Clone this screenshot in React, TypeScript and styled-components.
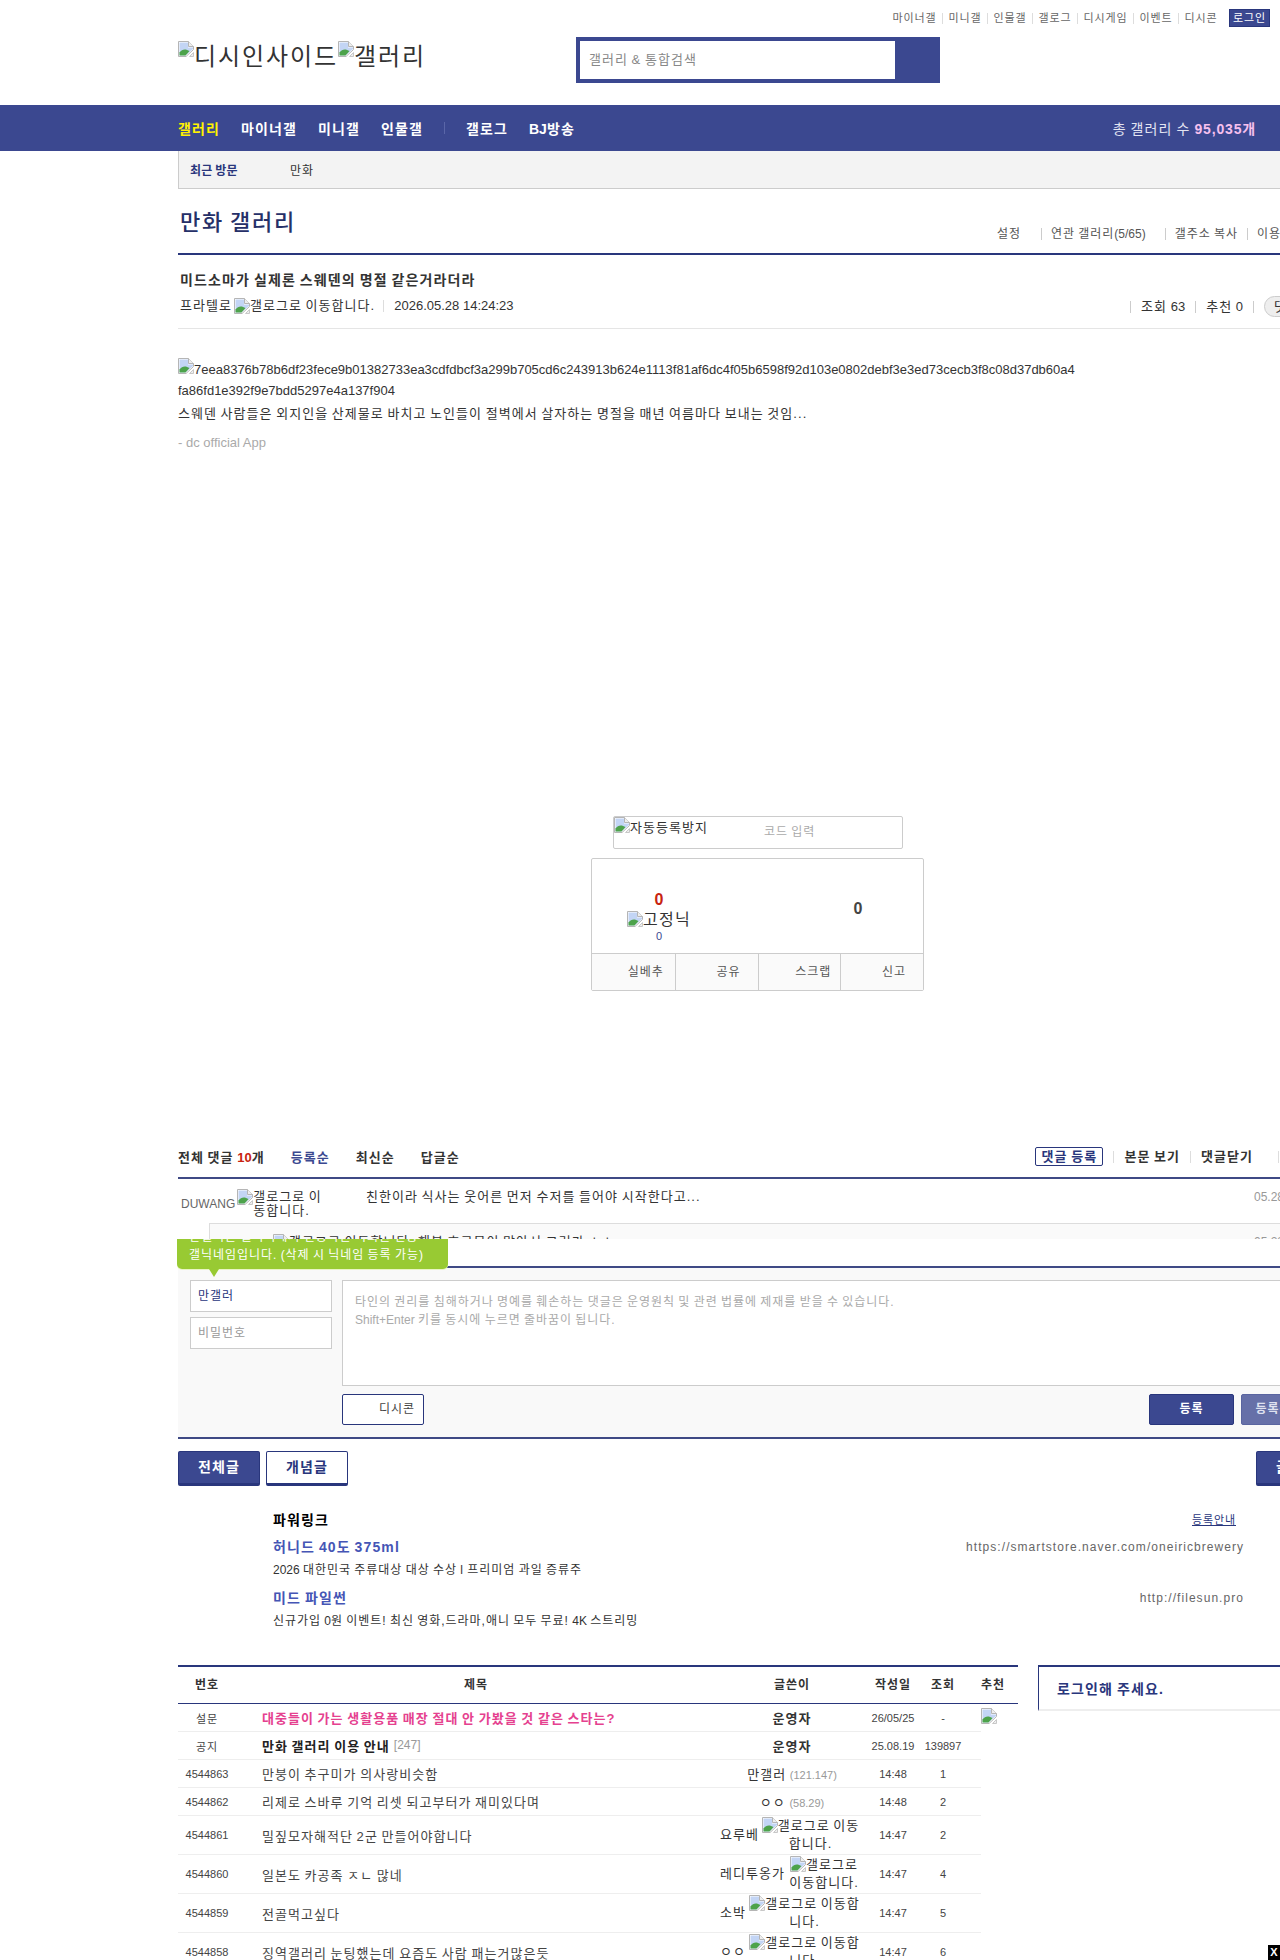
import styled, { createGlobalStyle } from 'styled-components';

const primary = '#3b4890';
const navy = '#29367c';

// the Hangul here runs 0.92em wide, the target has it at a full em
const GlobalStyle = createGlobalStyle`
    html, body {
        margin: 0;
        padding: 0;
        overflow: hidden;
        background: #fff;
    }
    body {
        font-family: "Liberation Sans", "Noto Sans CJK KR", sans-serif;
        font-size: 13px;
        color: #333;
    }
    * {
        letter-spacing: 0.08em;
        word-spacing: -0.08em;
    }
    #root {
        width: 1280px;
        height: 1960px;
        overflow: hidden;
    }
`;

const Latin = styled.span`
    letter-spacing: 0;
    word-spacing: 0;
`;

const Page = styled.div`
    width: 1280px;
    height: 1960px;
    overflow: hidden;
    position: relative;
`;

const Shell = styled.div`
    width: 1160px;
    margin-left: 178px;
`;

const Header = styled.header`
    height: 105px;
    display: flex;
    flex-direction: column;
    position: relative;
`;

const TopLinks = styled.div`
    display: flex;
    justify-content: flex-end;
    align-items: center;
    height: 18px;
    margin: 9px 0 0 0;
    padding-right: 10px;
    width: 1092px;
`;

const TopLink = styled.a`
    font-size: 11px;
    color: #666;
    padding: 0 5.5px;
    line-height: 11px;
    border-left: 1px solid #ddd;
    &:first-child {
        border-left: none;
    }
`;

const LoginButton = styled.a`
    margin-left: 6px;
    width: 41px;
    height: 18px;
    box-sizing: border-box;
    background: ${primary};
    border: 1px solid ${navy};
    color: #fff;
    font-size: 11px;
    line-height: 16px;
    text-align: center;
`;

const HeaderMain = styled.div`
    display: flex;
    margin-top: 10px;
`;

const Logo = styled.div`
    width: 398px;
    font-size: 24px;
    line-height: 32px;
    margin-top: 4px;
    color: #333;
    display: flex;
    align-items: flex-start;
`;

const SearchBox = styled.div`
    width: 364px;
    height: 46px;
    box-sizing: border-box;
    background: ${primary};
    padding: 4px 45px 4px 4px;
`;

const SearchInput = styled.div`
    height: 100%;
    background: #fff;
    color: #888;
    font-size: 13px;
    line-height: 38px;
    padding-left: 9px;
`;

const NavBar = styled.nav`
    height: 46px;
    background: ${primary};
    display: flex;
    align-items: center;
    justify-content: space-between;
    padding: 0 24px 0 178px;
`;

const NavGroup = styled.div`
    display: flex;
    align-items: center;
    gap: 21px;
`;

const NavItem = styled.a<{ $active?: boolean }>`
    font-size: 14px;
    font-weight: bold;
    color: ${({ $active }) => ($active ? '#fff200' : '#fff')};
`;

const NavDivider = styled.span`
    width: 1px;
    height: 12px;
    background: #5a66a8;
`;

const NavTotal = styled.div`
    font-size: 14px;
    color: #e3e5f2;
    b {
        color: #f6c0ee;
        letter-spacing: 0.06em;
    }
`;

const RecentBar = styled.div`
    height: 37px;
    box-sizing: content-box;
    background: #f3f3f3;
    border-left: 1px solid #ccc;
    border-bottom: 1px solid #ccc;
    display: flex;
    align-items: center;
    font-size: 12px;
    padding-left: 11px;
    b {
        width: 100px;
        color: ${navy};
        letter-spacing: 0.02em;
    }
`;

const TitleRow = styled.div`
    display: flex;
    justify-content: space-between;
    align-items: flex-end;
    height: 64px;
    border-bottom: 2px solid ${navy};
`;

const GalleryTitle = styled.h1`
    margin: 0 0 13px 2px;
    font-size: 22px;
    line-height: 34px;
    font-weight: 500;
    color: #263068;
`;

const TitleLinks = styled.div`
    display: flex;
    align-items: center;
    font-size: 12px;
    color: #555;
    margin: 0 24px 13px 0;
`;

const TitleLink = styled.a<{ $wide?: boolean }>`
    padding: 0 9px;
    line-height: 12px;
    border-left: 1px solid #ccc;
    &:first-child {
        border-left: none;
        padding-right: 20px;
    }
    ${({ $wide }) => $wide && 'padding-right: 19px;'}
`;

const PostHead = styled.div`
    height: 73px;
    border-bottom: 1px solid #e5e5e5;
    box-sizing: content-box;
`;

const PostTitle = styled.h2`
    margin: 0;
    padding: 15px 0 0 2px;
    font-size: 14px;
    line-height: 20px;
    font-weight: bold;
    color: #333;
`;

const PostMeta = styled.div`
    display: flex;
    justify-content: space-between;
    align-items: center;
    margin-top: 4px;
    padding-left: 2px;
    font-size: 13px;
    line-height: 18px;
    svg {
        margin-left: 2px;
    }
`;

const MetaLeft = styled.div`
    display: flex;
    align-items: center;
`;

const MetaDate = styled.span`
    margin-left: 8px;
    padding-left: 10px;
    line-height: 12px;
    border-left: 1px solid #ddd;
    letter-spacing: 0;
    word-spacing: 0;
`;

const MetaRight = styled.div`
    display: flex;
    align-items: center;
    padding-top: 2px;
`;

const Stat = styled.span`
    padding: 0 10px;
    line-height: 12px;
    border-left: 1px solid #ccc;
`;

const StatDivider = styled.span`
    width: 1px;
    height: 12px;
    background: #ccc;
    margin-right: 10px;
`;

const ReplyPill = styled.span`
    width: 74px;
    height: 21px;
    box-sizing: border-box;
    border: 1px solid #ccc;
    border-radius: 11px;
    background: #eee;
    padding-left: 9px;
    line-height: 19px;
`;

const PostBody = styled.div`
    height: 487px;
    padding-top: 29px;
    box-sizing: border-box;
    width: 900px;
    font-size: 13px;
    line-height: 21px;
    word-break: break-all;
    p {
        margin: 0;
    }
`;

const BodyHash = styled.p`
    letter-spacing: 0;
`;

const BodyText = styled.p`
    padding-top: 2px;
`;

const BodyApp = styled.p`
    color: #aaa;
    padding-top: 8px;
    letter-spacing: 0;
    word-spacing: 0;
`;

const Captcha = styled.div`
    width: 290px;
    height: 33px;
    box-sizing: border-box;
    margin: 0 auto;
    border: 1px solid #ccc;
    border-radius: 2px;
    display: flex;
    font-size: 13px;
    line-height: 16px;
`;

const CaptchaAlt = styled.div`
    width: 150px;
    display: flex;
    align-items: flex-start;
    span {
        display: block;
        padding-top: 3px;
    }
`;

const CaptchaPlaceholder = styled.div`
    font-size: 12px;
    color: #aaa;
    line-height: 31px;
`;

const RecommendBox = styled.div`
    width: 333px;
    height: 133px;
    box-sizing: border-box;
    margin: 9px 0 0 413px;
    border: 1px solid #ccc;
    border-radius: 2px;
    display: flex;
    flex-direction: column;
`;

const VoteArea = styled.div`
    height: 94px;
    border-bottom: 1px solid #ccc;
    display: grid;
    grid-template-columns: 134px 1fr;
`;

const VoteLeft = styled.div`
    padding-top: 31px;
    text-align: center;
    display: flex;
    flex-direction: column;
    align-items: center;
`;

const VoteCount = styled.div<{ $red?: boolean }>`
    font-size: 16px;
    line-height: 20px;
    font-weight: bold;
    letter-spacing: 0;
    color: ${({ $red }) => ($red ? '#c8230f' : '#444')};
`;

const VoteNick = styled.div`
    display: flex;
    font-size: 16px;
    line-height: 18px;
    margin-top: 1px;
`;

const VoteSub = styled.div`
    font-size: 11px;
    line-height: 14px;
    letter-spacing: 0;
    color: ${primary};
`;

const VoteRight = styled.div`
    padding: 40px 0 0 80px;
    text-align: center;
    width: 104px;
`;

const ActionRow = styled.div`
    flex: 1;
    display: grid;
    grid-template-columns: repeat(4, 1fr);
    background: #fafafa;
`;

const ActionCell = styled.div`
    border-left: 1px solid #ccc;
    font-size: 12px;
    color: #555;
    text-align: right;
    line-height: 36px;
    padding-right: 17px;
    &:first-child {
        border-left: none;
        padding-right: 11px;
    }
    &:nth-child(3) {
        padding-right: 9px;
    }
`;

const CommentHead = styled.div`
    margin-top: 156px;
    height: 30px;
    border-bottom: 2px solid #3f4a85;
    display: flex;
    justify-content: space-between;
    font-size: 13px;
    font-weight: bold;
    color: #333;
    line-height: 19px;
    box-sizing: content-box;
`;

const CommentTabs = styled.div`
    display: flex;
    gap: 26px;
    padding-top: 1px;
    em {
        font-style: normal;
        color: #c8230f;
        letter-spacing: 0;
    }
`;

const SortTab = styled.a<{ $active?: boolean }>`
    color: ${({ $active }) => ($active ? primary : '#333')};
`;

const CommentActions = styled.div`
    display: flex;
    align-items: flex-start;
`;

const CommentAction = styled.a`
    margin-top: 4px;
    padding: 0 10px;
    line-height: 12px;
    border-left: 1px solid #ddd;
    &:last-child {
        padding: 0 0 0 7px;
        margin-left: 15px;
    }
`;

const CommentRegister = styled.a`
    height: 19px;
    width: 68px;
    box-sizing: border-box;
    border: 1px solid ${navy};
    border-radius: 2px;
    color: ${navy};
    text-align: center;
    line-height: 17px;
    margin-right: 10px;
`;

const CommentList = styled.div`
    height: 60px;
    overflow: hidden;
`;

const CommentRow = styled.div`
    height: 44px;
    display: flex;
    padding-top: 10px;
    box-sizing: border-box;
    font-size: 13px;
    line-height: 16px;
`;

const CommentName = styled.div`
    width: 188px;
    flex: none;
    display: flex;
    padding-left: 3px;
    font-size: 12px;
    color: #666;
    line-height: 16px;
    align-items: flex-start;
    box-sizing: border-box;
    svg {
        margin-left: 2px;
    }
`;

const CommentNick = styled.span`
    padding-top: 7px;
    letter-spacing: 0;
`;

const CommentAlt = styled.div`
    width: 72px;
    flex: none;
    font-size: 13px;
    line-height: 14px;
    padding-top: 1px;
    color: #333;
`;

const CommentText = styled.div`
    flex: 1;
`;

const CommentDate = styled.div`
    font-size: 12px;
    color: #999;
    width: 84px;
    flex: none;
    letter-spacing: 0;
`;

const ReplyRow = styled(CommentRow)`
    margin-left: 31px;
    border-top: 1px solid #ddd;
    border-left: 1px solid #ddd;
    background: #fafafa;
    padding-left: 63px;
`;

const FormGap = styled.div`
    height: 27px;
    position: relative;
    z-index: 2;
`;

const NickTip = styled.div`
    position: absolute;
    left: -1px;
    top: 0;
    width: 271px;
    height: 30px;
    background: #98ca33;
    border-radius: 0 0 5px 5px;
    box-shadow: 0 1px 0 #e9f5c4;
    &::after {
        content: '';
        position: absolute;
        left: 32px;
        top: 30px;
        border-left: 5px solid transparent;
        border-right: 5px solid transparent;
        border-top: 8px solid #98ca33;
    }
`;

const NickTipText = styled.div`
    height: 100%;
    overflow: hidden;
    display: flex;
    flex-direction: column;
    justify-content: flex-end;
    padding: 0 12px 5px;
    box-sizing: border-box;
    color: #fff;
    font-size: 12px;
    line-height: 18px;
    white-space: nowrap;
`;

const ReplyForm = styled.div`
    border-top: 2px solid #3f4a85;
    border-bottom: 2px solid #3f4a85;
    background: #f9f9f9;
    display: grid;
    grid-template-columns: 142px 1fr;
    column-gap: 10px;
    padding: 12px 12px 0 12px;
    box-sizing: content-box;
    height: 157px;
`;

const FormLeft = styled.div`
    display: flex;
    flex-direction: column;
    gap: 5px;
`;

const FormInput = styled.div<{ $muted?: boolean }>`
    height: 32px;
    box-sizing: border-box;
    border: 1px solid #ccc;
    background: #fff;
    font-size: 12px;
    line-height: 31px;
    padding-left: 7px;
    color: ${({ $muted }) => ($muted ? '#999' : navy)};
`;

const FormRight = styled.div`
    display: flex;
    flex-direction: column;
`;

const FormTextarea = styled.div`
    height: 106px;
    box-sizing: border-box;
    border: 1px solid #ccc;
    background: #fff;
    color: #aaa;
    font-size: 12px;
    line-height: 18px;
    padding: 12px;
`;

const FormButtons = styled.div`
    display: flex;
    align-items: flex-start;
    margin-top: 8px;
    gap: 7px;
`;

const DcconButton = styled.a`
    width: 82px;
    height: 31px;
    box-sizing: border-box;
    border: 1px solid ${navy};
    border-radius: 2px;
    background: #fff;
    font-size: 12px;
    color: #444;
    line-height: 29px;
    text-align: right;
    padding-right: 8px;
    margin-right: auto;
`;

const SubmitButton = styled.a<{ $light?: boolean }>`
    width: 85px;
    height: 31px;
    box-sizing: border-box;
    border-radius: 2px;
    border: 1px solid ${({ $light }) => ($light ? '#5a65a0' : navy)};
    background: ${({ $light }) => ($light ? '#6670a8' : primary)};
    color: ${({ $light }) => ($light ? '#dfe2f0' : '#fff')};
    font-size: 12px;
    font-weight: bold;
    line-height: 29px;
    text-align: center;
`;

const TabRow = styled.div`
    display: flex;
    gap: 6px;
    margin-top: 12px;
    height: 35px;
`;

const TabButton = styled.a<{ $variant: 'solid' | 'line' }>`
    width: 82px;
    flex: none;
    box-sizing: border-box;
    border-radius: 2px;
    border: 1px solid ${navy};
    border-bottom-width: 3px;
    background: ${({ $variant }) => ($variant === 'solid' ? primary : '#fff')};
    color: ${({ $variant }) => ($variant === 'solid' ? '#fff' : navy)};
    font-size: 14px;
    font-weight: bold;
    line-height: 31px;
    text-align: center;
`;

const WriteButton = styled(TabButton)`
    margin-left: 902px;
`;

const PowerLink = styled.section`
    margin-top: 24px;
    padding-left: 95px;
    width: 971px;
    height: 123px;
`;

const PowerHead = styled.div`
    display: flex;
    justify-content: space-between;
    align-items: center;
    height: 18px;
    padding-right: 8px;
    font-size: 14px;
    font-weight: bold;
    color: #000;
    a {
        font-size: 11px;
        font-weight: normal;
        color: ${navy};
        text-decoration: underline;
    }
`;

const PowerItem = styled.div`
    margin-top: 9px;
    &:first-of-type {
        margin-top: 12px;
    }
`;

const PowerLine = styled.div`
    display: flex;
    justify-content: space-between;
    height: 21px;
    line-height: 20px;
`;

const PowerTitle = styled.a`
    color: #4555b5;
    font-size: 14px;
    font-weight: bold;
`;

const PowerUrl = styled.span`
    color: #666;
    font-size: 12px;
    letter-spacing: 1.05px;
`;

const PowerDesc = styled.div`
    font-size: 12px;
    line-height: 18px;
    margin-top: 3px;
    color: #333;
`;

const ListArea = styled.div`
    display: flex;
    align-items: flex-start;
    margin-top: 32px;
`;

const Board = styled.div`
    width: 840px;
    flex: none;
    border-top: 2px solid ${navy};
`;

const columns = '58px 480px 152px 50px 50px';

const BoardHead = styled.div`
    display: grid;
    grid-template-columns: ${columns} 50px;
    height: 37px;
    box-sizing: border-box;
    border-bottom: 1px solid ${navy};
    font-size: 12px;
    font-weight: bold;
    line-height: 37px;
    text-align: center;
    color: #333;
`;

const BoardRow = styled.div<{ $tall?: boolean }>`
    width: 803px;
    display: grid;
    grid-template-columns: ${columns} 13px;
    align-items: center;
    box-sizing: border-box;
    height: ${({ $tall }) => ($tall ? 39 : 28)}px;
    border-bottom: 1px solid #eee;
    text-align: center;
    font-size: 11px;
    color: #444;
    letter-spacing: 0;
    & > div {
        letter-spacing: 0;
    }
`;

const RowKind = styled.div`
    && {
        letter-spacing: 0.08em;
    }
`;

const RowTitle = styled.div<{ $kind?: 'survey' | 'notice' }>`
    text-align: left;
    padding-left: 26px;
    font-size: 13px;
    font-weight: ${({ $kind }) => ($kind ? 'bold' : 'normal')};
    color: ${({ $kind }) => ($kind === 'survey' ? '#e5418f' : $kind === 'notice' ? '#222' : '#444')};
    && {
        letter-spacing: 0.08em;
    }
    em {
        font-style: normal;
        font-weight: normal;
        font-size: 12px;
        color: #999;
        margin-left: 4px;
        letter-spacing: 0;
        position: relative;
        top: -2px;
    }
`;

const RowAuthor = styled.div<{ $bold?: boolean }>`
    font-size: 13px;
    font-weight: ${({ $bold }) => ($bold ? 'bold' : 'normal')};
    color: #333;
    && {
        letter-spacing: 0.08em;
    }
    span {
        font-size: 11px;
        color: #999;
        letter-spacing: 0;
    }
`;

const AuthorWithAlt = styled.div`
    font-size: 13px;
    line-height: 18px;
    color: #333;
    display: flex;
    justify-content: space-between;
    align-items: center;
    padding: 0 7px 0 4px;
    text-align: center;
    && {
        letter-spacing: 0.08em;
    }
`;

const AltBlock = styled.div<{ $width: number }>`
    width: ${({ $width }) => $width}px;
    flex: none;
    svg {
        vertical-align: -3px;
    }
`;

const RowExtra = styled.div`
    height: 16px;
    position: relative;
    top: -2px;
    svg {
        position: absolute;
        left: 13px;
        top: 0;
    }
`;

const SidePanel = styled.div`
    width: 300px;
    margin-left: 20px;
    height: 46px;
    box-sizing: border-box;
    border-top: 2px solid ${navy};
    border-left: 1px solid ${navy};
    border-bottom: 2px solid #eee;
    padding: 12px 0 0 18px;
    font-size: 14px;
    line-height: 20px;
    font-weight: bold;
    color: ${navy};
`;

const CloseAd = styled.a`
    position: fixed;
    right: 0;
    bottom: 0;
    width: 12px;
    height: 15px;
    background: #000;
    color: #fff;
    font-size: 11px;
    font-weight: bold;
    line-height: 15px;
    text-align: center;
    letter-spacing: 0;
`;

const BrokenImage = () => (
    <svg width="16" height="16" viewBox="0 0 16 16" style={{ flex: 'none' }}>
        <path d="M.5.5h10l5 5v3L8 15.500H.5z" fill="#fff" stroke="#b5b5b5" />
        <path d="M10.500.5v5h5" fill="#eee" stroke="#b5b5b5" />
        <path d="M1.500 1.500h8.500v5h5V8L7.500 14.500h-6z" fill="#c3d5f5" />
        <path d="M1.500 14.500v-3C4 8 7.500 7.500 11.500 10L7.500 14.500z" fill="#4da34b" />
        <path d="M16 9.500V16H9.500z" fill="#fff" />
        <path d="M11.500 15.500l4-4v4z" fill="#eee" stroke="#c8c8c8" />
    </svg>
);

const topLinks = ['마이너갤', '미니갤', '인물갤', '갤로그', '디시게임', '이벤트', '디시콘'];

type Row = { no: string; title: string; author: string; ip?: string; altWidth?: number; date: string; views: string };

const rows: Row[] = [
    { no: '4544863', title: '만붕이 추구미가 의사랑비슷함', author: '만갤러', ip: '(121.147)', date: '14:48', views: '1' },
    { no: '4544862', title: '리제로 스바루 기억 리셋 되고부터가 재미있다며', author: 'ㅇㅇ', ip: '(58.29)', date: '14:48', views: '2' },
    { no: '4544861', title: '밀짚모자해적단 2군 만들어야합니다', author: '요루베', altWidth: 101, date: '14:47', views: '2' },
    { no: '4544860', title: '일본도 카공족 ㅈㄴ 많네', author: '레디투옹가', altWidth: 74, date: '14:47', views: '4' },
    { no: '4544859', title: '전골먹고싶다', author: '소박', altWidth: 113, date: '14:47', views: '5' },
    { no: '4544858', title: '징역갤러리 눈팅했는데 요즘도 사람 패는거많은듯', author: 'ㅇㅇ', altWidth: 113, date: '14:47', views: '6' },
];

const App = () => (
    <Page>
        <GlobalStyle />
        <Shell>
            <Header>
                <TopLinks>
                    {topLinks.map((link) => (
                        <TopLink key={link}>{link}</TopLink>
                    ))}
                    <LoginButton>로그인</LoginButton>
                </TopLinks>
                <HeaderMain>
                    <Logo>
                        <BrokenImage />
                        디시인사이드
                        <BrokenImage />
                        갤러리
                    </Logo>
                    <SearchBox>
                        <SearchInput>갤러리 &amp; 통합검색</SearchInput>
                    </SearchBox>
                </HeaderMain>
            </Header>
        </Shell>
        <NavBar>
            <NavGroup>
                <NavItem $active>갤러리</NavItem>
                <NavItem>마이너갤</NavItem>
                <NavItem>미니갤</NavItem>
                <NavItem>인물갤</NavItem>
                <NavDivider />
                <NavItem>갤로그</NavItem>
                <NavItem>
                    <Latin>BJ</Latin>방송
                </NavItem>
            </NavGroup>
            <NavTotal>
                총 갤러리 수 <b>95,035개</b>
            </NavTotal>
        </NavBar>
        <Shell>
            <RecentBar>
                <b>최근 방문</b>
                <span>만화</span>
            </RecentBar>
            <TitleRow>
                <GalleryTitle>만화 갤러리</GalleryTitle>
                <TitleLinks>
                    <TitleLink>설정</TitleLink>
                    <TitleLink $wide>
                        연관 갤러리<Latin>(5/65)</Latin>
                    </TitleLink>
                    <TitleLink>갤주소 복사</TitleLink>
                    <TitleLink>이용안내</TitleLink>
                </TitleLinks>
            </TitleRow>
            <PostHead>
                <PostTitle>미드소마가 실제론 스웨덴의 명절 같은거라더라</PostTitle>
                <PostMeta>
                    <MetaLeft>
                        프라텔로
                        <BrokenImage />
                        갤로그로 이동합니다.
                        <MetaDate>2026.05.28 14:24:23</MetaDate>
                    </MetaLeft>
                    <MetaRight>
                        <Stat>
                            조회 <Latin>63</Latin>
                        </Stat>
                        <Stat>
                            추천 <Latin>0</Latin>
                        </Stat>
                        <StatDivider />
                        <ReplyPill>댓글 0</ReplyPill>
                    </MetaRight>
                </PostMeta>
            </PostHead>
            <PostBody>
                <BodyHash>
                    <BrokenImage />
                    7eea8376b78b6df23fece9b01382733ea3cdfdbcf3a299b705cd6c243913b624e1113f81af6dc4f05b6598f92d103e0802debf3e3ed73cecb3f8c08d37db60a4fa86fd1e392f9e7bdd5297e4a137f904
                </BodyHash>
                <BodyText>스웨덴 사람들은 외지인을 산제물로 바치고 노인들이 절벽에서 살자하는 명절을 매년 여름마다 보내는 것임...</BodyText>
                <BodyApp>- dc official App</BodyApp>
            </PostBody>
            <Captcha>
                <CaptchaAlt>
                    <BrokenImage />
                    <span>자동등록방지</span>
                </CaptchaAlt>
                <CaptchaPlaceholder>코드 입력</CaptchaPlaceholder>
            </Captcha>
            <RecommendBox>
                <VoteArea>
                    <VoteLeft>
                        <VoteCount $red>0</VoteCount>
                        <VoteNick>
                            <BrokenImage />
                            고정닉
                        </VoteNick>
                        <VoteSub>0</VoteSub>
                    </VoteLeft>
                    <VoteRight>
                        <VoteCount>0</VoteCount>
                    </VoteRight>
                </VoteArea>
                <ActionRow>
                    <ActionCell>실베추</ActionCell>
                    <ActionCell>공유</ActionCell>
                    <ActionCell>스크랩</ActionCell>
                    <ActionCell>신고</ActionCell>
                </ActionRow>
            </RecommendBox>
            <CommentHead>
                <CommentTabs>
                    <span>
                        전체 댓글 <em>10</em>개
                    </span>
                    <SortTab $active>등록순</SortTab>
                    <SortTab>최신순</SortTab>
                    <SortTab>답글순</SortTab>
                </CommentTabs>
                <CommentActions>
                    <CommentRegister>댓글 등록</CommentRegister>
                    <CommentAction>본문 보기</CommentAction>
                    <CommentAction>댓글닫기</CommentAction>
                    <CommentAction>새로고침</CommentAction>
                </CommentActions>
            </CommentHead>
            <CommentList>
                <CommentRow>
                    <CommentName>
                        <CommentNick>DUWANG</CommentNick>
                        <BrokenImage />
                        <CommentAlt>갤로그로 이동합니다.</CommentAlt>
                    </CommentName>
                    <CommentText>친한이라 식사는 웃어른 먼저 수저를 들어야 시작한다고...</CommentText>
                    <CommentDate>05.28 14:30:11</CommentDate>
                </CommentRow>
                <ReplyRow>
                    <BrokenImage />
                    <CommentText>갤로그로 이동합니다. 행복 호르몬이 많아서 그런가 ㅎㅎ</CommentText>
                    <CommentDate>05.28 14:32:40</CommentDate>
                </ReplyRow>
            </CommentList>
            <FormGap>
                <NickTip>
                    <NickTipText>
                        <div>만갤러는 갤러리에서 인증하는 비회원 전용</div>
                        <div>갤닉네임입니다. (삭제 시 닉네임 등록 가능)</div>
                    </NickTipText>
                </NickTip>
            </FormGap>
            <ReplyForm>
                <FormLeft>
                    <FormInput>만갤러</FormInput>
                    <FormInput $muted>비밀번호</FormInput>
                </FormLeft>
                <FormRight>
                    <FormTextarea>
                        타인의 권리를 침해하거나 명예를 훼손하는 댓글은 운영원칙 및 관련 법률에 제재를 받을 수 있습니다.
                        <br />
                        <Latin>Shift+Enter</Latin> 키를 동시에 누르면 줄바꿈이 됩니다.
                    </FormTextarea>
                    <FormButtons>
                        <DcconButton>디시콘</DcconButton>
                        <SubmitButton>등록</SubmitButton>
                        <SubmitButton $light>등록+추천</SubmitButton>
                    </FormButtons>
                </FormRight>
            </ReplyForm>
            <TabRow>
                <TabButton $variant="solid">전체글</TabButton>
                <TabButton $variant="line">개념글</TabButton>
                <WriteButton $variant="solid">글쓰기</WriteButton>
            </TabRow>
            <PowerLink>
                <PowerHead>
                    파워링크
                    <a>등록안내</a>
                </PowerHead>
                <PowerItem>
                    <PowerLine>
                        <PowerTitle>허니드 40도 375ml</PowerTitle>
                        <PowerUrl>https://smartstore.naver.com/oneiricbrewery</PowerUrl>
                    </PowerLine>
                    <PowerDesc>
                        <Latin>2026</Latin> 대한민국 주류대상 대상 수상 l 프리미엄 과일 증류주
                    </PowerDesc>
                </PowerItem>
                <PowerItem>
                    <PowerLine>
                        <PowerTitle>미드 파일썬</PowerTitle>
                        <PowerUrl>http://filesun.pro</PowerUrl>
                    </PowerLine>
                    <PowerDesc>
                        신규가입 <Latin>0</Latin>원 이벤트! 최신 영화,드라마,애니 모두 무료! <Latin>4K</Latin> 스트리밍
                    </PowerDesc>
                </PowerItem>
            </PowerLink>
            <ListArea>
                <Board>
                    <BoardHead>
                        <div>번호</div>
                        <div>제목</div>
                        <div>글쓴이</div>
                        <div>작성일</div>
                        <div>조회</div>
                        <div>추천</div>
                    </BoardHead>
                    <BoardRow>
                        <RowKind>설문</RowKind>
                        <RowTitle $kind="survey">대중들이 가는 생활용품 매장 절대 안 가봤을 것 같은 스타는?</RowTitle>
                        <RowAuthor $bold>운영자</RowAuthor>
                        <div>26/05/25</div>
                        <div>-</div>
                        <RowExtra>
                            <BrokenImage />
                        </RowExtra>
                    </BoardRow>
                    <BoardRow>
                        <RowKind>공지</RowKind>
                        <RowTitle $kind="notice">
                            만화 갤러리 이용 안내<em>[247]</em>
                        </RowTitle>
                        <RowAuthor $bold>운영자</RowAuthor>
                        <div>25.08.19</div>
                        <div>139897</div>
                    </BoardRow>
                    {rows.map((row) => (
                        <BoardRow key={row.no} $tall={row.altWidth !== undefined}>
                            <div>{row.no}</div>
                            <RowTitle>{row.title}</RowTitle>
                            {row.altWidth ? (
                                <AuthorWithAlt>
                                    {row.author}
                                    <AltBlock $width={row.altWidth}>
                                        <BrokenImage />
                                        갤로그로 이동합니다.
                                    </AltBlock>
                                </AuthorWithAlt>
                            ) : (
                                <RowAuthor>
                                    {row.author} <span>{row.ip}</span>
                                </RowAuthor>
                            )}
                            <div>{row.date}</div>
                            <div>{row.views}</div>
                        </BoardRow>
                    ))}
                </Board>
                <SidePanel>로그인해 주세요.</SidePanel>
            </ListArea>
        </Shell>
        <CloseAd>X</CloseAd>
    </Page>
);

export default App;
